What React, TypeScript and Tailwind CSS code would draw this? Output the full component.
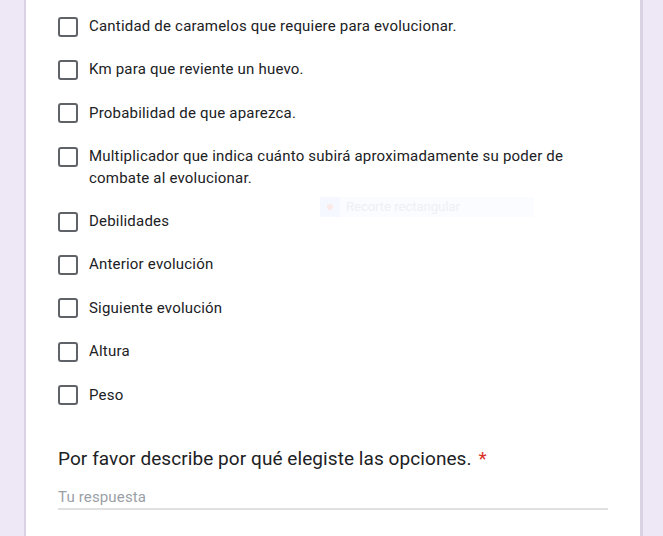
import React from "react";

const items: string[][] = [
  ["Cantidad de caramelos que requiere para evolucionar."],
  ["Km para que reviente un huevo."],
  ["Probabilidad de que aparezca."],
  ["Multiplicador que indica cuánto subirá aproximadamente su poder de", "combate al evolucionar."],
  ["Debilidades"],
  ["Anterior evolución"],
  ["Siguiente evolución"],
  ["Altura"],
  ["Peso"],
];

export default function App() {
  return (
    <div
      className="w-full h-[536px] overflow-hidden bg-[#ede7f6] pl-[24px] pr-[20px]"
      style={{ fontFamily: "Roboto, 'Liberation Sans', sans-serif" }}
    >
      <div className="relative h-full bg-white border-l-2 border-r-[3px] border-[#d8d2e2]">
        <div className="pl-[32px] pr-[32px] pt-[5px]">
          {items.map((lines, i) => (
            <div key={i} className="flex items-start py-[11px]">
              <div className="mt-[0.5px] w-[20px] h-[20px] shrink-0 rounded-[3px] border-2 border-[#5f6368]" />
              <div className="ml-[11px] text-[15px] leading-[21.4px] text-[#202124] tracking-[0.2px]">
                {lines.map((l, j) => (
                  <div key={j}>{l}</div>
                ))}
              </div>
            </div>
          ))}
          <div className="mt-[30px] text-[19px] leading-[24px] tracking-[0.07px] text-[#202124]">
            Por favor describe por qué elegiste las opciones.
            <span className="ml-[7px] text-[#d93025]">*</span>
          </div>
          <div className="mt-[16px] w-[550px] border-b-2 border-[#e0e0e0] pb-[1px] text-[15px] leading-[20px] tracking-[0.15px] text-[#9aa0a6]">
            Tu respuesta
          </div>
        </div>
        <div className="absolute left-[294px] top-[197px] w-[214px] h-[20px] flex items-center bg-[#fafcff]">
          <div className="w-[20px] h-[20px] flex items-center justify-center bg-[#f5f9ff]">
            <div className="w-[6px] h-[6px] rounded-full bg-[#fae9e6]" />
          </div>
          <span className="ml-[6px] text-[13px] text-[#eef0f4]">Recorte rectangular</span>
        </div>
      </div>
    </div>
  );
}
